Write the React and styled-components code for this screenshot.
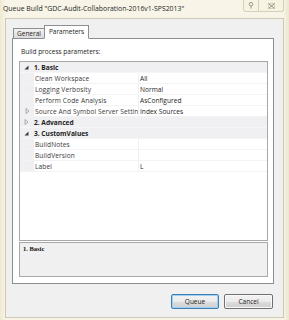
import React from "react";
import styled, { createGlobalStyle } from "styled-components";

const Global = createGlobalStyle`
  html, body { margin: 0; padding: 0; background: #f3efdc; }
  body { font-family: "Open Sans", "Liberation Sans", sans-serif; }
`;

const rows = [
  { type: "cat", label: "1. Basic", open: true },
  { name: "Clean Workspace", value: "All" },
  { name: "Logging Verbosity", value: "Normal" },
  { name: "Perform Code Analysis", value: "AsConfigured" },
  { name: "Source And Symbol Server Settings", value: "Index Sources", expander: true },
  { type: "cat", label: "2. Advanced", open: false },
  { type: "cat", label: "3. CustomValues", open: true },
  { name: "BuildNotes", value: "" },
  { name: "BuildVersion", value: "" },
  { name: "Label", value: "L" },
];

const Arrow = ({ open }) =>
  open ? (
    <svg width="5" height="5" viewBox="0 0 5 5">
      <polygon points="4.5,0.5 4.5,4.5 0.5,4.5" fill="#3c3c3c" />
    </svg>
  ) : (
    <svg width="5" height="6" viewBox="0 0 5 6">
      <polygon points="1,0.5 4,3 1,5.5" fill="none" stroke="#9a9a9a" strokeWidth="0.8" />
    </svg>
  );

const App = () => {
  return (
    <>
      <Global />
      <Window>
        <TitleBar>
          <Title>Queue Build "GDC-Audit-Collaboration-2016v1-SPS2013"</Title>
          <Captions>
            <CaptionButton $w={16}>
              <svg width="6" height="7" viewBox="0 0 6 7">
                <circle cx="3" cy="2.2" r="1.8" fill="none" stroke="#8a8470" strokeWidth="0.8" />
                <line x1="3" y1="4" x2="3" y2="6.5" stroke="#8a8470" strokeWidth="0.8" />
              </svg>
            </CaptionButton>
            <CaptionButton $w={26}>
              <svg width="7" height="6" viewBox="0 0 7 6">
                <path d="M0.5 0.5 L6.5 5.5 M6.5 0.5 L0.5 5.5" stroke="#8a8470" strokeWidth="0.9" />
                <rect x="0.5" y="0.5" width="6" height="5" fill="none" stroke="#b8b29c" strokeWidth="0.5" />
              </svg>
            </CaptionButton>
          </Captions>
        </TitleBar>
        <Client>
          <TabStrip>
            <Tab>General</Tab>
            <Tab $active>Parameters</Tab>
          </TabStrip>
          <TabPanel>
            <Caption>Build process parameters:</Caption>
            <Grid>
              {rows.map((r, i) =>
                r.type === "cat" ? (
                  <CatRow key={i}>
                    <Gutter $cat>
                      <Arrow open={r.open} />
                    </Gutter>
                    <CatLabel>{r.label}</CatLabel>
                  </CatRow>
                ) : (
                  <PropRow key={i}>
                    <Gutter>{r.expander && <Arrow open={false} />}</Gutter>
                    <PropName>{r.name}</PropName>
                    <PropValue>{r.value}</PropValue>
                  </PropRow>
                )
              )}
            </Grid>
            <Description>1. Basic</Description>
          </TabPanel>
          <Buttons>
            <Button $default>Queue</Button>
            <Button>Cancel</Button>
          </Buttons>
        </Client>
      </Window>
    </>
  );
};

const Window = styled.div`
  width: 289px;
  height: 320px;
  box-sizing: border-box;
  background: linear-gradient(90deg, #efe9d2 0px, #f8f5e8 6px, #f8f5e8 283px, #ece6cd 289px);
  display: flex;
  flex-direction: column;
  overflow: hidden;
`;

const TitleBar = styled.div`
  height: 18px;
  display: flex;
  align-items: flex-start;
  padding-left: 3px;
  padding-right: 5px;
`;

const Title = styled.div`
  font-family: "Open Sans", "Liberation Sans", sans-serif;
  font-size: 6.9px;
  color: #1e1e1e;
  margin-top: 4px;
  white-space: nowrap;
`;

const Captions = styled.div`
  margin-left: auto;
  display: flex;
`;

const CaptionButton = styled.div`
  width: ${(p) => p.$w}px;
  height: 12px;
  box-sizing: border-box;
  border: 1px solid #d6d0b8;
  border-top: none;
  margin-left: -1px;
  background: #f7f3e3;
  display: flex;
  align-items: center;
  justify-content: center;
  &:first-child { border-bottom-left-radius: 3px; }
  &:last-child { border-bottom-right-radius: 3px; }
`;

const Client = styled.div`
  margin: 0 5px 0 5px;
  height: 300px;
  box-sizing: border-box;
  background: #f0f0f0;
  border: 1px solid #cfc9b3;
  display: flex;
  flex-direction: column;
  padding: 6px 10px 0 6px;
`;

const TabStrip = styled.div`
  display: flex;
  align-items: flex-end;
  height: 13px;
  padding-left: 1px;
  position: relative;
  z-index: 1;
`;

const Tab = styled.div`
  font-family: "Open Sans", "Liberation Sans", sans-serif;
  font-size: 6.5px;
  color: #1e1e1e;
  box-sizing: border-box;
  border: 1px solid #8c8e94;
  border-bottom: ${(p) => (p.$active ? "1px solid #fff" : "none")};
  background: ${(p) => (p.$active ? "#ffffff" : "linear-gradient(#f2f2f2, #dcdcdc)")};
  height: ${(p) => (p.$active ? "14px" : "10px")};
  margin-bottom: ${(p) => (p.$active ? "-1px" : "0")};
  padding: ${(p) => (p.$active ? "1px 4px 0 4px" : "0 3px")};
  margin-left: ${(p) => (p.$active ? "-1px" : "0")};
  display: flex;
  align-items: ${(p) => (p.$active ? "flex-start" : "center")};
  line-height: 9px;
`;

const TabPanel = styled.div`
  width: 262px;
  height: 246px;
  box-sizing: border-box;
  background: #ffffff;
  border: 1px solid #8c8e94;
  padding: 8px 5px 0 6px;
  display: flex;
  flex-direction: column;
`;

const Caption = styled.div`
  font-family: "Open Sans", "Liberation Sans", sans-serif;
  font-size: 6.5px;
  color: #1e1e1e;
  padding-left: 2px;
  height: 9px;
  line-height: 9px;
`;

const Grid = styled.div`
  margin-top: 5px;
  width: 249px;
  height: 180px;
  box-sizing: border-box;
  border: 1px solid #a8a8a8;
  background: #ffffff;
  display: flex;
  flex-direction: column;
`;

const RowBase = styled.div`
  height: 11px;
  flex: none;
  display: flex;
  align-items: stretch;
  font-family: "Open Sans", "Liberation Sans", sans-serif;
  font-size: 6.6px;
  line-height: 11px;
  box-sizing: border-box;
`;

const CatRow = styled(RowBase)`
  background: #f0f0f2;
  border-bottom: 1px solid #f6f6f8;
`;

const PropRow = styled(RowBase)`
  border-bottom: 1px solid #f3f3f5;
`;

const Gutter = styled.div`
  width: 13px;
  flex: none;
  background: #f0f0f2;
  display: flex;
  align-items: center;
  justify-content: center;
  padding-left: ${(p) => (p.$cat ? "0" : "1px")};
`;

const CatLabel = styled.div`
  font-weight: 700;
  color: #222;
  padding-left: 1px;
`;

const PropName = styled.div`
  width: 105px;
  flex: none;
  box-sizing: border-box;
  padding-left: 1px;
  color: #3a3a3a;
  white-space: nowrap;
  overflow: hidden;
  border-right: 1px solid #f0f0f2;
  letter-spacing: 0.1px;
`;

const PropValue = styled.div`
  padding-left: 1px;
  color: #1e1e1e;
  white-space: nowrap;
`;

const Description = styled.div`
  margin-top: 1px;
  width: 249px;
  height: 35px;
  box-sizing: border-box;
  border: 1px solid #a8a8a8;
  background: #f0f0f0;
  font-family: "Liberation Serif", serif;
  font-weight: 700;
  font-size: 6.5px;
  color: #111;
  padding: 2px 0 0 3px;
`;

const Buttons = styled.div`
  display: flex;
  justify-content: flex-end;
  gap: 5px;
  margin-top: 10px;
`;

const Button = styled.div`
  width: ${(p) => (p.$default ? "48px" : "49px")};
  height: 15px;
  box-sizing: border-box;
  border: 1px solid ${(p) => (p.$default ? "#3c7fb1" : "#707070")};
  border-radius: 2px;
  background: linear-gradient(#f2f2f2 0%, #ebebeb 50%, #dddddd 51%, #cfcfcf 100%);
  box-shadow: inset 0 0 0 1px ${(p) => (p.$default ? "#9fd0f5" : "#fafafa")};
  font-family: "Open Sans", "Liberation Sans", sans-serif;
  font-size: 6.5px;
  color: #1e1e1e;
  display: flex;
  align-items: center;
  justify-content: center;
`;

export default App;
